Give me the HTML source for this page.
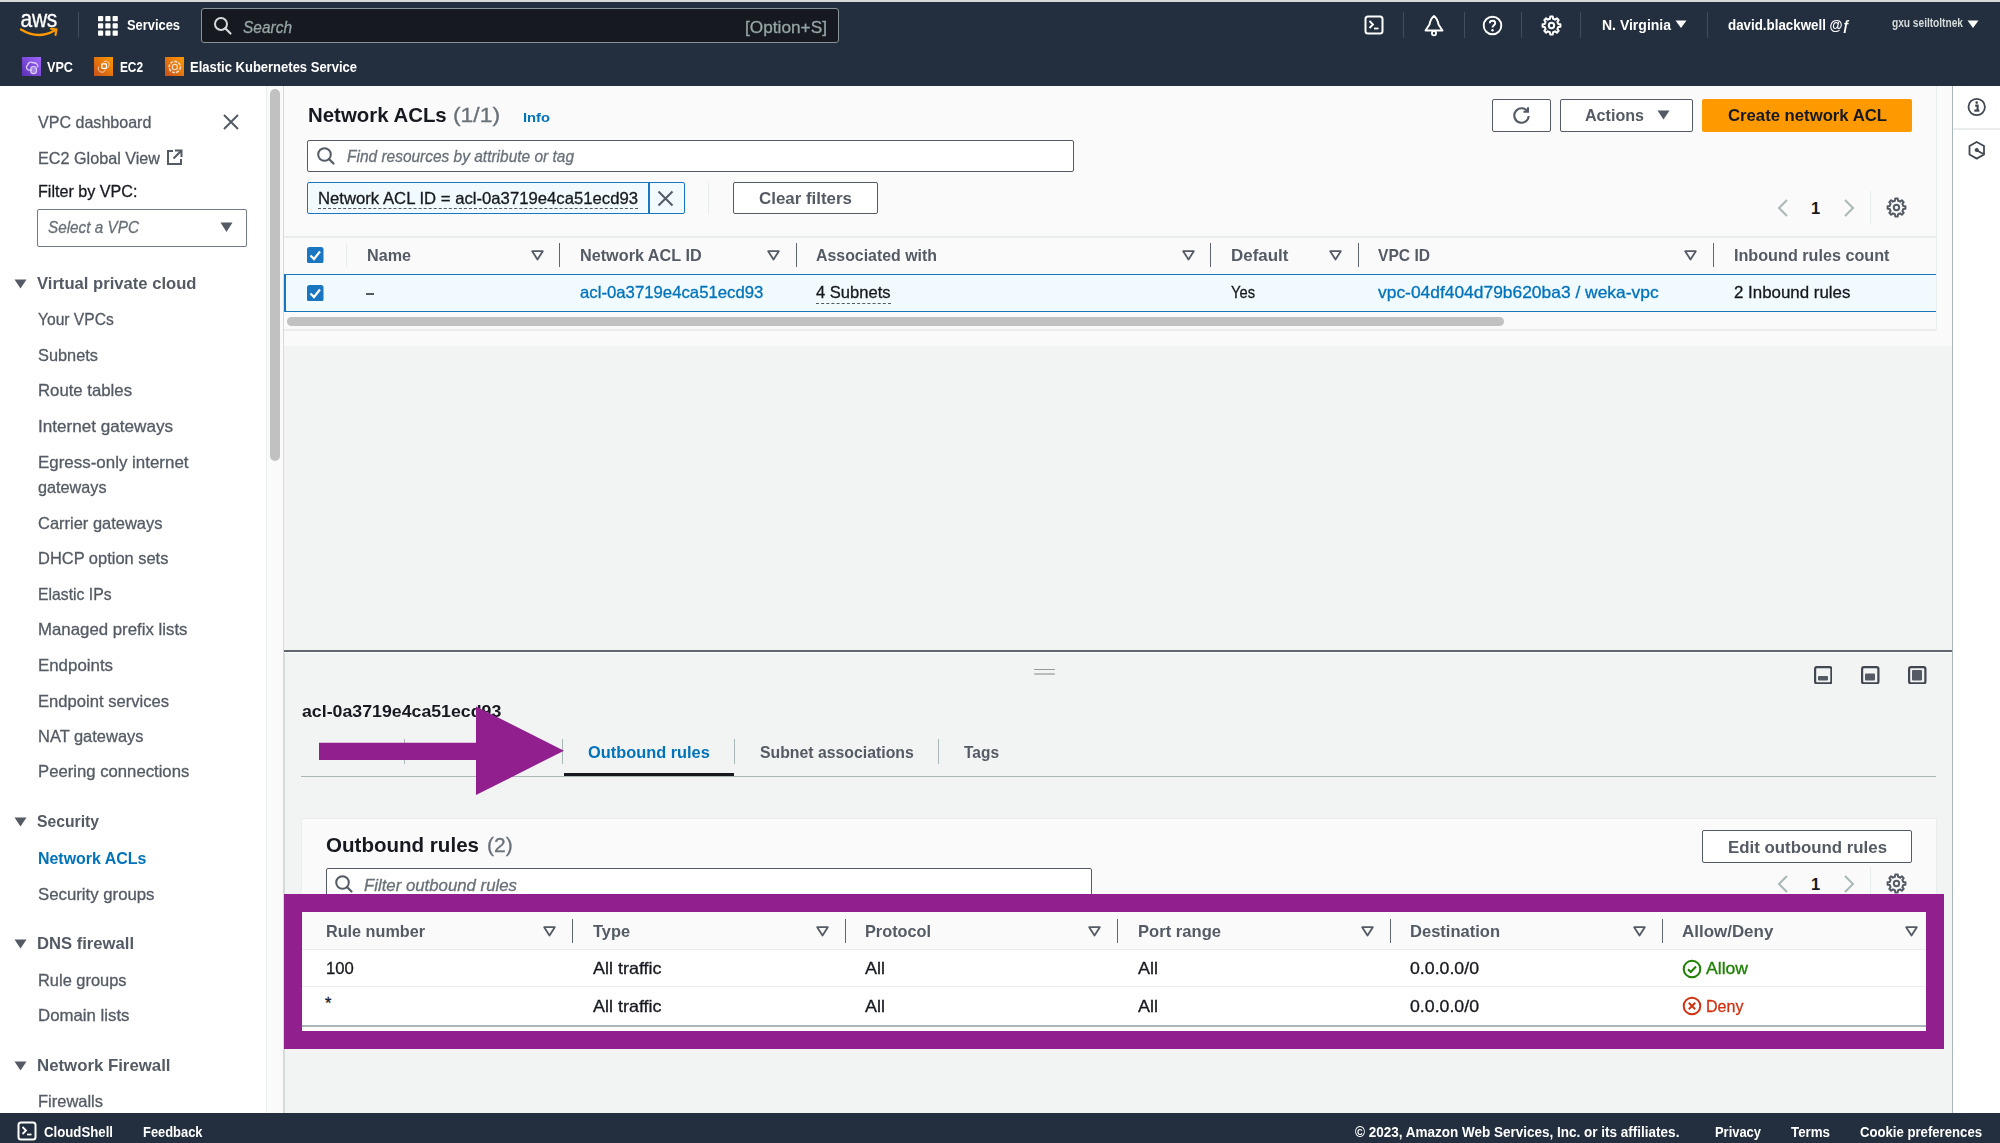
<!DOCTYPE html>
<html><head><meta charset="utf-8"><title>Network ACLs | VPC Console</title>
<style>
html,body{margin:0;padding:0;width:2000px;height:1143px;overflow:hidden;background:#f2f3f3;font-family:"Liberation Sans",sans-serif;}
.t{position:absolute;white-space:nowrap;transform-origin:0 50%;}
.s{-webkit-text-stroke:0.3px currentColor;}
.r{position:absolute;display:block;}
</style></head><body>
<div class="r" style="left:0px;top:0px;width:2000px;height:2px;background:#d9d9d9;"></div>
<div class="r" style="left:0px;top:2px;width:2000px;height:84px;background:#232f3e;"></div>
<div class="t" style="left:20.5px;top:7.75px;font-size:21px;line-height:26px;color:#fff;transform:scale(1.0,1.18);transform-origin:0 100%;letter-spacing:-0.3px;-webkit-text-stroke:0.3px #fff">aws</div>
<svg class="r" style="left:19px;top:27px" width="42" height="12" viewBox="0 0 42 12"><path d="M2 2.5 Q19 13 35.5 3.5" stroke="#ff9900" stroke-width="2.4" fill="none" stroke-linecap="round"/><path d="M32 1.8 L37.5 2.2 L36.5 8" stroke="#ff9900" stroke-width="2.1" fill="none" stroke-linecap="round" stroke-linejoin="round"/></svg>
<div class="r" style="left:77.5px;top:12px;width:1.2px;height:26px;background:#414d5c;"></div>
<svg class="r" style="left:98px;top:16px" width="20" height="20" viewBox="0 0 20 20"><rect x="0.0" y="0.0" width="5.2" height="5.2" rx="0.8" fill="#fff"/><rect x="7.3" y="0.0" width="5.2" height="5.2" rx="0.8" fill="#fff"/><rect x="14.6" y="0.0" width="5.2" height="5.2" rx="0.8" fill="#fff"/><rect x="0.0" y="7.3" width="5.2" height="5.2" rx="0.8" fill="#fff"/><rect x="7.3" y="7.3" width="5.2" height="5.2" rx="0.8" fill="#fff"/><rect x="14.6" y="7.3" width="5.2" height="5.2" rx="0.8" fill="#fff"/><rect x="0.0" y="14.6" width="5.2" height="5.2" rx="0.8" fill="#fff"/><rect x="7.3" y="14.6" width="5.2" height="5.2" rx="0.8" fill="#fff"/><rect x="14.6" y="14.6" width="5.2" height="5.2" rx="0.8" fill="#fff"/></svg>
<div class="t" style="left:127px;top:15.98px;font-size:14.5px;line-height:18px;font-weight:bold;font-style:normal;color:#ffffff;transform:scaleX(0.8883);">Services</div>
<div class="r" style="left:201px;top:8px;width:638px;height:35px;background:#16191f;border:1.3px solid #879596;box-sizing:border-box;border-radius:3px;"></div>
<svg class="r" style="left:213px;top:16px" width="20" height="20" viewBox="0 0 20 20"><circle cx="8" cy="8" r="6" stroke="#d5dbdb" stroke-width="2" fill="none"/><path d="M12.3 12.3 L17.5 17.5" stroke="#d5dbdb" stroke-width="2.2" stroke-linecap="round"/></svg>
<div class="t s" style="left:243px;top:16.61px;font-size:17px;line-height:21px;font-weight:normal;font-style:italic;color:#95a5a6;transform:scaleX(0.9097);">Search</div>
<div class="t s" style="left:745px;top:16.61px;font-size:17px;line-height:21px;font-weight:normal;font-style:normal;color:#95a5a6;transform:scaleX(1.0148);">[Option+S]</div>
<svg class="r" style="left:1364px;top:15px" width="21" height="21" viewBox="0 0 21 21"><rect x="1.5" y="1.5" width="17" height="17" rx="2.5" stroke="#fff" stroke-width="2" fill="none"/><path d="M5.5 6 L9 9.5 L5.5 13" stroke="#fff" stroke-width="1.8" fill="none"/><path d="M10 13.5 H14.5" stroke="#fff" stroke-width="1.8"/></svg>
<div class="r" style="left:1403px;top:12px;width:1.2px;height:26px;background:#414d5c;"></div>
<svg class="r" style="left:1423px;top:14px" width="22" height="23" viewBox="0 0 22 23"><path d="M11 2 C8 4.5 7 7 6.5 10.5 L2.5 16.5 H19.5 L15.5 10.5 C15 7 14 4.5 11 2 Z" stroke="#fff" stroke-width="1.9" fill="none" stroke-linejoin="round"/><circle cx="11" cy="19.2" r="2.1" stroke="#fff" stroke-width="1.8" fill="none"/></svg>
<div class="r" style="left:1463.5px;top:12px;width:1.2px;height:26px;background:#414d5c;"></div>
<svg class="r" style="left:1482px;top:15px" width="21" height="21" viewBox="0 0 21 21"><circle cx="10.5" cy="10.5" r="8.8" stroke="#fff" stroke-width="1.9" fill="none"/><path d="M7.8 8.2 C7.8 5 13.2 5 13.2 8.2 C13.2 10.2 10.5 10.3 10.5 12.6" stroke="#fff" stroke-width="1.9" fill="none"/><circle cx="10.5" cy="15.3" r="1.2" fill="#fff"/></svg>
<div class="r" style="left:1521px;top:12px;width:1.2px;height:26px;background:#414d5c;"></div>
<svg class="r" style="left:1541px;top:15px" width="21" height="21" viewBox="0 0 21 21"><path d="M17.21 8.89 L19.41 9.23 L19.41 11.77 L17.21 12.11 L16.38 14.11 L17.70 15.90 L15.90 17.70 L14.11 16.38 L12.11 17.21 L11.77 19.41 L9.23 19.41 L8.89 17.21 L6.89 16.38 L5.10 17.70 L3.30 15.90 L4.62 14.11 L3.79 12.11 L1.59 11.77 L1.59 9.23 L3.79 8.89 L4.62 6.89 L3.30 5.10 L5.10 3.30 L6.89 4.62 L8.89 3.79 L9.23 1.59 L11.77 1.59 L12.11 3.79 L14.11 4.62 L15.90 3.30 L17.70 5.10 L16.38 6.89 Z" stroke="#fff" stroke-width="2.0" fill="none" stroke-linejoin="round"/><circle cx="10.5" cy="10.5" r="2.7" stroke="#fff" stroke-width="2.0" fill="none"/></svg>
<div class="r" style="left:1580px;top:12px;width:1.2px;height:26px;background:#414d5c;"></div>
<div class="t" style="left:1602px;top:14.80px;font-size:15px;line-height:19px;font-weight:bold;font-style:normal;color:#ffffff;transform:scaleX(0.9336);">N. Virginia</div>
<svg class="r" style="left:1675px;top:20px" width="12" height="9" viewBox="0 0 12 9"><path d="M0.5 0.5 H11.5 L6 8 Z" fill="#fff"/></svg>
<div class="r" style="left:1707px;top:12px;width:1.2px;height:26px;background:#414d5c;"></div>
<div class="t" style="left:1728px;top:14.80px;font-size:15px;line-height:19px;font-weight:bold;font-style:normal;color:#ffffff;transform:scaleX(0.8893);">david.blackwell @ƒ</div>
<div class="t" style="left:1892px;top:16.34px;font-size:12px;line-height:15px;font-weight:bold;font-style:normal;color:#d5dbdb;transform:scaleX(0.8500);letter-spacing:-0.035px;filter:blur(0.6px);">gxu seiltoltnek</div>
<svg class="r" style="left:1967px;top:20px" width="12" height="9" viewBox="0 0 12 9"><path d="M0.5 0.5 H11.5 L6 8 Z" fill="#fff"/></svg>
<svg class="r" style="left:22px;top:57px" width="19" height="19" viewBox="0 0 19 19"><defs><linearGradient id="g22" x1="0" y1="1" x2="1" y2="0"><stop offset="0" stop-color="#5a30b5"/><stop offset="1" stop-color="#a166ff"/></linearGradient></defs><rect width="19" height="19" fill="url(#g22)"/><path d="M9.5 13.2 H7 C4.3 13.2 3.6 9.5 5.6 8.4 C5.8 5.2 9.5 4.2 11.4 6 C13.5 5.2 15.6 6.8 15.8 9.6" stroke="#ddd0f7" stroke-width="1.3" fill="none" stroke-linecap="round"/><rect x="8.8" y="9.5" width="5.6" height="7.2" rx="2.6" stroke="#ddd0f7" stroke-width="1.2" fill="rgba(255,255,255,0.3)"/></svg>
<div class="t" style="left:46.6px;top:57.65px;font-size:14px;line-height:18px;font-weight:bold;font-style:normal;color:#ffffff;transform:scaleX(0.9032);">VPC</div>
<svg class="r" style="left:94px;top:57px" width="19" height="19" viewBox="0 0 19 19"><defs><linearGradient id="g94" x1="0" y1="1" x2="1" y2="0"><stop offset="0" stop-color="#c8511b"/><stop offset="1" stop-color="#ff9900"/></linearGradient></defs><rect width="19" height="19" fill="url(#g94)"/><rect x="7.8" y="6.8" width="4.6" height="4.6" rx="0.6" stroke="#fff" stroke-width="1.3" fill="none"/><path d="M4.8 9.5 C3.6 11 4 15 8 15.2 C10 15.3 11 14 11.2 12.5 M9.5 5.2 C10.5 3.6 15 3.5 15.2 7.5 C15.3 9.5 14 10.6 12.6 10.8" stroke="#f6dcc4" stroke-width="1" fill="none" opacity="0.9"/></svg>
<div class="t" style="left:120px;top:57.65px;font-size:14px;line-height:18px;font-weight:bold;font-style:normal;color:#ffffff;transform:scaleX(0.8500);letter-spacing:-0.088px;">EC2</div>
<svg class="r" style="left:165px;top:57px" width="19" height="19" viewBox="0 0 19 19"><defs><linearGradient id="g165" x1="0" y1="1" x2="1" y2="0"><stop offset="0" stop-color="#c8511b"/><stop offset="1" stop-color="#ff9900"/></linearGradient></defs><rect width="19" height="19" fill="url(#g165)"/><circle cx="9.8" cy="10" r="5.6" stroke="#f6dcc4" stroke-width="1.6" fill="none" stroke-dasharray="3 1.2"/><circle cx="9.8" cy="10" r="2.6" stroke="#f6dcc4" stroke-width="1.2" fill="none"/></svg>
<div class="t" style="left:190px;top:57.65px;font-size:14px;line-height:18px;font-weight:bold;font-style:normal;color:#ffffff;transform:scaleX(0.9290);">Elastic Kubernetes Service</div>
<div class="r" style="left:0px;top:86px;width:266px;height:1027px;background:#ffffff;"></div>
<div class="r" style="left:266px;top:86px;width:1px;height:1027px;background:#eaeded;"></div>
<div class="r" style="left:267px;top:86px;width:17px;height:1027px;background:#fafafa;"></div>
<div class="r" style="left:270px;top:89px;width:10px;height:371.6px;background:#c1c1c1;border-radius:5px;"></div>
<div class="r" style="left:283px;top:86px;width:1.8px;height:1027px;background:#d5dbdb;"></div>
<div class="t s" style="left:37.5px;top:111.98px;font-size:16.5px;line-height:21px;font-weight:normal;font-style:normal;color:#545b64;transform:scaleX(0.9734);">VPC dashboard</div>
<svg class="r" style="left:222px;top:113px" width="18" height="18" viewBox="0 0 18 18"><path d="M2 2 L16 16 M16 2 L2 16" stroke="#545b64" stroke-width="2" /></svg>
<div class="t s" style="left:37.5px;top:147.78px;font-size:16.5px;line-height:21px;font-weight:normal;font-style:normal;color:#545b64;transform:scaleX(0.9805);">EC2 Global View</div>
<svg class="r" style="left:165px;top:148px" width="19" height="19" viewBox="0 0 19 19"><path d="M8 3 H3 V16 H16 V11" stroke="#545b64" stroke-width="2" fill="none"/><path d="M10 2.5 H16.5 V9 M16.5 2.5 L8.5 10.5" stroke="#545b64" stroke-width="2" fill="none"/></svg>
<div class="t s" style="left:37.5px;top:180.88px;font-size:16.5px;line-height:21px;font-weight:normal;font-style:normal;color:#16191f;transform:scaleX(0.9777);">Filter by VPC:</div>
<div class="r" style="left:37px;top:209px;width:210px;height:37.5px;background:#fff;border:1.5px solid #6f7a86;box-sizing:border-box;border-radius:2px;"></div>
<div class="t s" style="left:47.5px;top:217.28px;font-size:16.5px;line-height:21px;font-weight:normal;font-style:italic;color:#687078;transform:scaleX(0.9273);">Select a VPC</div>
<svg class="r" style="left:220px;top:222px" width="13" height="11" viewBox="0 0 13 11"><path d="M0.5 0.5 H12.5 L6.5 10 Z" fill="#545b64"/></svg>
<svg class="r" style="left:14px;top:278.9px" width="13" height="10" viewBox="0 0 13 10"><path d="M0.5 0.5 H12.5 L6.5 9.5 Z" fill="#545b64"/></svg>
<div class="t" style="left:36.5px;top:273.18px;font-size:16.5px;line-height:21px;font-weight:bold;font-style:normal;color:#545b64;transform:scaleX(1.0074);">Virtual private cloud</div>
<div class="t s" style="left:37.5px;top:309.48px;font-size:16.5px;line-height:21px;font-weight:normal;font-style:normal;color:#545b64;transform:scaleX(0.9450);">Your VPCs</div>
<div class="t s" style="left:37.5px;top:344.98px;font-size:16.5px;line-height:21px;font-weight:normal;font-style:normal;color:#545b64;transform:scaleX(0.9910);">Subnets</div>
<div class="t s" style="left:37.5px;top:380.28px;font-size:16.5px;line-height:21px;font-weight:normal;font-style:normal;color:#545b64;transform:scaleX(1.0146);">Route tables</div>
<div class="t s" style="left:37.5px;top:415.78px;font-size:16.5px;line-height:21px;font-weight:normal;font-style:normal;color:#545b64;transform:scaleX(1.0365);">Internet gateways</div>
<div class="t s" style="left:37.5px;top:451.58px;font-size:16.5px;line-height:21px;font-weight:normal;font-style:normal;color:#545b64;transform:scaleX(1.0256);">Egress-only internet</div>
<div class="t s" style="left:37.5px;top:477.28px;font-size:16.5px;line-height:21px;font-weight:normal;font-style:normal;color:#545b64;transform:scaleX(0.9827);">gateways</div>
<div class="t s" style="left:37.5px;top:512.78px;font-size:16.5px;line-height:21px;font-weight:normal;font-style:normal;color:#545b64;transform:scaleX(0.9983);">Carrier gateways</div>
<div class="t s" style="left:37.5px;top:548.38px;font-size:16.5px;line-height:21px;font-weight:normal;font-style:normal;color:#545b64;transform:scaleX(0.9966);">DHCP option sets</div>
<div class="t s" style="left:37.5px;top:584.08px;font-size:16.5px;line-height:21px;font-weight:normal;font-style:normal;color:#545b64;transform:scaleX(0.9543);">Elastic IPs</div>
<div class="t s" style="left:37.5px;top:619.28px;font-size:16.5px;line-height:21px;font-weight:normal;font-style:normal;color:#545b64;transform:scaleX(1.0188);">Managed prefix lists</div>
<div class="t s" style="left:37.5px;top:655.28px;font-size:16.5px;line-height:21px;font-weight:normal;font-style:normal;color:#545b64;transform:scaleX(1.0219);">Endpoints</div>
<div class="t s" style="left:37.5px;top:690.98px;font-size:16.5px;line-height:21px;font-weight:normal;font-style:normal;color:#545b64;transform:scaleX(1.0058);">Endpoint services</div>
<div class="t s" style="left:37.5px;top:726.28px;font-size:16.5px;line-height:21px;font-weight:normal;font-style:normal;color:#545b64;transform:scaleX(0.9974);">NAT gateways</div>
<div class="t s" style="left:37.5px;top:761.48px;font-size:16.5px;line-height:21px;font-weight:normal;font-style:normal;color:#545b64;transform:scaleX(1.0119);">Peering connections</div>
<svg class="r" style="left:14px;top:816.9px" width="13" height="10" viewBox="0 0 13 10"><path d="M0.5 0.5 H12.5 L6.5 9.5 Z" fill="#545b64"/></svg>
<div class="t" style="left:36.5px;top:811.18px;font-size:16.5px;line-height:21px;font-weight:bold;font-style:normal;color:#545b64;transform:scaleX(0.9522);">Security</div>
<div class="t" style="left:37.5px;top:848.18px;font-size:16.5px;line-height:21px;font-weight:bold;font-style:normal;color:#0073bb;transform:scaleX(0.9656);">Network ACLs</div>
<div class="t s" style="left:37.5px;top:883.78px;font-size:16.5px;line-height:21px;font-weight:normal;font-style:normal;color:#545b64;transform:scaleX(1.0162);">Security groups</div>
<svg class="r" style="left:14px;top:938.8px" width="13" height="10" viewBox="0 0 13 10"><path d="M0.5 0.5 H12.5 L6.5 9.5 Z" fill="#545b64"/></svg>
<div class="t" style="left:36.5px;top:933.08px;font-size:16.5px;line-height:21px;font-weight:bold;font-style:normal;color:#545b64;transform:scaleX(1.0075);">DNS firewall</div>
<div class="t s" style="left:37.5px;top:970.08px;font-size:16.5px;line-height:21px;font-weight:normal;font-style:normal;color:#545b64;transform:scaleX(0.9947);">Rule groups</div>
<div class="t s" style="left:37.5px;top:1005.18px;font-size:16.5px;line-height:21px;font-weight:normal;font-style:normal;color:#545b64;transform:scaleX(1.0183);">Domain lists</div>
<svg class="r" style="left:14px;top:1060.7px" width="13" height="10" viewBox="0 0 13 10"><path d="M0.5 0.5 H12.5 L6.5 9.5 Z" fill="#545b64"/></svg>
<div class="t" style="left:36.5px;top:1054.98px;font-size:16.5px;line-height:21px;font-weight:bold;font-style:normal;color:#545b64;transform:scaleX(1.0181);">Network Firewall</div>
<div class="t s" style="left:37.5px;top:1091.18px;font-size:16.5px;line-height:21px;font-weight:normal;font-style:normal;color:#545b64;transform:scaleX(0.9986);">Firewalls</div>
<div class="r" style="left:284.3px;top:86px;width:1668px;height:564.5px;background:#f2f3f3;"></div>
<div class="r" style="left:284.3px;top:86px;width:1668px;height:260px;background:#fafafa;"></div>
<div class="r" style="left:1935.5px;top:86px;width:1.5px;height:244px;background:#eaeded;"></div>
<div class="r" style="left:284.3px;top:329px;width:1652px;height:2px;background:#eaeded;"></div>
<div class="t" style="left:307.7px;top:101.92px;font-size:21px;line-height:26px;font-weight:bold;font-style:normal;color:#16191f;transform:scaleX(0.9716);">Network ACLs</div>
<div class="t s" style="left:453px;top:101.92px;font-size:21px;line-height:26px;font-weight:normal;font-style:normal;color:#687078;transform:scaleX(1.0884);">(1/1)</div>
<div class="t" style="left:522.7px;top:109.22px;font-size:13.5px;line-height:17px;font-weight:bold;font-style:normal;color:#0073bb;transform:scaleX(1.0914);">Info</div>
<div class="r" style="left:1491.8px;top:99px;width:59px;height:32.7px;background:#fff;border:1.5px solid #545b64;box-sizing:border-box;border-radius:2px;"></div>
<svg class="r" style="left:1511px;top:105px" width="21" height="21" viewBox="0 0 21 21"><path d="M16.5 6.5 A7.2 7.2 0 1 0 17.7 11" stroke="#545b64" stroke-width="2.1" fill="none"/><path d="M12.5 6.8 H17 V2.3" stroke="#545b64" stroke-width="2.1" fill="none"/></svg>
<div class="r" style="left:1560.4px;top:99px;width:132.5px;height:32.7px;background:#fff;border:1.5px solid #545b64;box-sizing:border-box;border-radius:2px;"></div>
<div class="t" style="left:1585px;top:105.38px;font-size:16.5px;line-height:21px;font-weight:bold;font-style:normal;color:#545b64;transform:scaleX(0.9751);">Actions</div>
<svg class="r" style="left:1657px;top:110px" width="13" height="10" viewBox="0 0 13 10"><path d="M0.5 0.5 H12.5 L6.5 9.5 Z" fill="#545b64"/></svg>
<div class="r" style="left:1702.3px;top:98.6px;width:209.5px;height:33.2px;background:#ff9900;border-radius:2px;"></div>
<div class="t" style="left:1727.5px;top:105.38px;font-size:16.5px;line-height:21px;font-weight:bold;font-style:normal;color:#16191f;transform:scaleX(1.0121);">Create network ACL</div>
<div class="r" style="left:307px;top:139.5px;width:766.5px;height:32px;background:#fff;border:1.3px solid #545b64;box-sizing:border-box;border-radius:2px;"></div>
<svg class="r" style="left:316px;top:146px" width="20" height="20" viewBox="0 0 20 20"><circle cx="8.5" cy="8.5" r="6.3" stroke="#545b64" stroke-width="2" fill="none"/><path d="M13 13 L17.5 17.5" stroke="#545b64" stroke-width="2.2" stroke-linecap="round"/></svg>
<div class="t s" style="left:347px;top:146.48px;font-size:16.5px;line-height:21px;font-weight:normal;font-style:italic;color:#687078;transform:scaleX(0.9375);">Find resources by attribute or tag</div>
<div class="r" style="left:307px;top:181.8px;width:377.5px;height:32.5px;background:#f1faff;border:1.6px solid #1a76c0;box-sizing:border-box;border-radius:2px;"></div>
<div class="r" style="left:648px;top:182px;width:1.5px;height:32px;background:#1a76c0;"></div>
<div class="t s" style="left:318px;top:187.78px;font-size:16.5px;line-height:21px;font-weight:normal;font-style:normal;color:#16191f;transform:scaleX(1.0117);">Network ACL ID = acl-0a3719e4ca51ecd93</div>
<div class="r" style="left:318px;top:207.5px;width:320px;height:0;border-top:1.3px dashed #545b64"></div>
<svg class="r" style="left:657px;top:190px" width="17" height="17" viewBox="0 0 17 17"><path d="M1.5 1.5 L15.5 15.5 M15.5 1.5 L1.5 15.5" stroke="#545b64" stroke-width="2"/></svg>
<div class="r" style="left:708px;top:182px;width:1.2px;height:32px;background:#eaeded;"></div>
<div class="r" style="left:733px;top:182px;width:144.5px;height:32.3px;background:#fff;border:1.5px solid #545b64;box-sizing:border-box;border-radius:2px;"></div>
<div class="t" style="left:759px;top:188.08px;font-size:16.5px;line-height:21px;font-weight:bold;font-style:normal;color:#545b64;transform:scaleX(1.0243);">Clear filters</div>
<svg class="r" style="left:1776px;top:198.5px" width="14" height="18" viewBox="0 0 14 18"><path d="M11 1 L3 9 L11 17" stroke="#aab7b8" stroke-width="2" fill="none"/></svg>
<div class="t" style="left:1811px;top:197.58px;font-size:16.5px;line-height:21px;font-weight:bold;font-style:normal;color:#16191f;">1</div>
<svg class="r" style="left:1842px;top:198.5px" width="14" height="18" viewBox="0 0 14 18"><path d="M3 1 L11 9 L3 17" stroke="#aab7b8" stroke-width="2" fill="none"/></svg>
<div class="r" style="left:1870.3px;top:191.0px;width:1.2px;height:33px;background:#eaeded;"></div>
<svg class="r" style="left:1886px;top:197.0px" width="21" height="21" viewBox="0 0 21 21"><path d="M17.21 8.89 L19.41 9.23 L19.41 11.77 L17.21 12.11 L16.38 14.11 L17.70 15.90 L15.90 17.70 L14.11 16.38 L12.11 17.21 L11.77 19.41 L9.23 19.41 L8.89 17.21 L6.89 16.38 L5.10 17.70 L3.30 15.90 L4.62 14.11 L3.79 12.11 L1.59 11.77 L1.59 9.23 L3.79 8.89 L4.62 6.89 L3.30 5.10 L5.10 3.30 L6.89 4.62 L8.89 3.79 L9.23 1.59 L11.77 1.59 L12.11 3.79 L14.11 4.62 L15.90 3.30 L17.70 5.10 L16.38 6.89 Z" stroke="#545b64" stroke-width="2.0" fill="none" stroke-linejoin="round"/><circle cx="10.5" cy="10.5" r="2.7" stroke="#545b64" stroke-width="2.0" fill="none"/></svg>
<div class="r" style="left:284.3px;top:236px;width:1652px;height:1.5px;background:#eaeded;"></div>
<svg class="r" style="left:307px;top:246.5px" width="16.5" height="16.5" viewBox="0 0 16.5 16.5"><rect x="0" y="0" width="16.5" height="16.5" rx="2.5" fill="#1a76c0"/><path d="M3.5 8.5 L7 12 L13 4.5" stroke="#fff" stroke-width="2.2" fill="none"/></svg>
<div class="r" style="left:346.3px;top:243px;width:1.2px;height:23.5px;background:#eaeded;"></div>
<div class="t" style="left:366.7px;top:244.98px;font-size:16.5px;line-height:21px;font-weight:bold;font-style:normal;color:#545b64;transform:scaleX(0.9791);">Name</div>
<svg class="r" style="left:530.5px;top:250px" width="13" height="11" viewBox="0 0 13 11"><path d="M1.2 1.2 H11.8 L6.5 9.5 Z" stroke="#545b64" stroke-width="1.8" fill="none" stroke-linejoin="round"/></svg>
<div class="r" style="left:558.7px;top:243px;width:1.3px;height:23.5px;background:#5f6670;"></div>
<div class="t" style="left:579.6px;top:244.98px;font-size:16.5px;line-height:21px;font-weight:bold;font-style:normal;color:#545b64;transform:scaleX(0.9825);">Network ACL ID</div>
<svg class="r" style="left:767.3px;top:250px" width="13" height="11" viewBox="0 0 13 11"><path d="M1.2 1.2 H11.8 L6.5 9.5 Z" stroke="#545b64" stroke-width="1.8" fill="none" stroke-linejoin="round"/></svg>
<div class="r" style="left:795.8px;top:243px;width:1.3px;height:23.5px;background:#5f6670;"></div>
<div class="t" style="left:816px;top:244.98px;font-size:16.5px;line-height:21px;font-weight:bold;font-style:normal;color:#545b64;transform:scaleX(0.9633);">Associated with</div>
<svg class="r" style="left:1181.5px;top:250px" width="13" height="11" viewBox="0 0 13 11"><path d="M1.2 1.2 H11.8 L6.5 9.5 Z" stroke="#545b64" stroke-width="1.8" fill="none" stroke-linejoin="round"/></svg>
<div class="r" style="left:1210px;top:243px;width:1.3px;height:23.5px;background:#5f6670;"></div>
<div class="t" style="left:1230.6px;top:244.98px;font-size:16.5px;line-height:21px;font-weight:bold;font-style:normal;color:#545b64;transform:scaleX(1.0264);">Default</div>
<svg class="r" style="left:1329px;top:250px" width="13" height="11" viewBox="0 0 13 11"><path d="M1.2 1.2 H11.8 L6.5 9.5 Z" stroke="#545b64" stroke-width="1.8" fill="none" stroke-linejoin="round"/></svg>
<div class="r" style="left:1358px;top:243px;width:1.3px;height:23.5px;background:#5f6670;"></div>
<div class="t" style="left:1378px;top:244.98px;font-size:16.5px;line-height:21px;font-weight:bold;font-style:normal;color:#545b64;transform:scaleX(0.9452);">VPC ID</div>
<svg class="r" style="left:1683.5px;top:250px" width="13" height="11" viewBox="0 0 13 11"><path d="M1.2 1.2 H11.8 L6.5 9.5 Z" stroke="#545b64" stroke-width="1.8" fill="none" stroke-linejoin="round"/></svg>
<div class="r" style="left:1713px;top:243px;width:1.3px;height:23.5px;background:#5f6670;"></div>
<div class="t" style="left:1733.6px;top:244.98px;font-size:16.5px;line-height:21px;font-weight:bold;font-style:normal;color:#545b64;transform:scaleX(0.9800);">Inbound rules count</div>
<div class="r" style="left:284.3px;top:273.5px;width:1651.5px;height:38.5px;background:#f1faff;border:1.6px solid #1a76c0;box-sizing:border-box;border-right:none;"></div>
<div class="r" style="left:284.3px;top:273.5px;width:1.6px;height:38.5px;background:#1a76c0;"></div>
<svg class="r" style="left:307px;top:284.5px" width="16.5" height="16.5" viewBox="0 0 16.5 16.5"><rect x="0" y="0" width="16.5" height="16.5" rx="2.5" fill="#1a76c0"/><path d="M3.5 8.5 L7 12 L13 4.5" stroke="#fff" stroke-width="2.2" fill="none"/></svg>
<div class="r" style="left:365.8px;top:293.3px;width:8.5px;height:2.1px;background:#545b64;"></div>
<div class="t s" style="left:579.6px;top:282.18px;font-size:16.5px;line-height:21px;font-weight:normal;font-style:normal;color:#0073bb;transform:scaleX(1.0147);">acl-0a3719e4ca51ecd93</div>
<div class="t s" style="left:816px;top:282.18px;font-size:16.5px;line-height:21px;font-weight:normal;font-style:normal;color:#16191f;transform:scaleX(1.0026);">4 Subnets</div>
<div class="r" style="left:816px;top:302.5px;width:74.5px;height:0;border-top:1.3px dashed #545b64"></div>
<div class="t s" style="left:1230.6px;top:282.18px;font-size:16.5px;line-height:21px;font-weight:normal;font-style:normal;color:#16191f;transform:scaleX(0.8916);">Yes</div>
<div class="t s" style="left:1378px;top:282.18px;font-size:16.5px;line-height:21px;font-weight:normal;font-style:normal;color:#0073bb;transform:scaleX(1.0548);">vpc-04df404d79b620ba3 / weka-vpc</div>
<div class="t s" style="left:1733.6px;top:282.18px;font-size:16.5px;line-height:21px;font-weight:normal;font-style:normal;color:#16191f;transform:scaleX(1.0233);">2 Inbound rules</div>
<div class="r" style="left:287px;top:316.7px;width:1216.5px;height:9px;background:#c1c1c1;border-radius:4.5px;"></div>
<div class="r" style="left:1952px;top:86px;width:48px;height:1027px;background:#ffffff;"></div>
<div class="r" style="left:1952px;top:86px;width:1.3px;height:1027px;background:#aab7b8;"></div>
<div class="r" style="left:1953px;top:128.3px;width:47px;height:1.3px;background:#eaeded;"></div>
<svg class="r" style="left:1967px;top:97px" width="20" height="20" viewBox="0 0 20 20"><circle cx="9.7" cy="10" r="8.2" stroke="#414750" stroke-width="1.8" fill="none"/><circle cx="9.7" cy="5.6" r="1.3" fill="#414750"/><path d="M8.2 8.6 H10.6 V13.2" stroke="#414750" stroke-width="2.1" fill="none"/><path d="M7.3 13.6 H12.3" stroke="#414750" stroke-width="2.2" fill="none"/></svg>
<svg class="r" style="left:1967px;top:140px" width="20" height="21" viewBox="0 0 20 21"><path d="M9.7 2 L17 6 V14.5 L9.7 18.6 L2.5 14.5 V6 Z" stroke="#414750" stroke-width="1.8" fill="none" stroke-linejoin="round"/><circle cx="9.7" cy="10" r="1.6" fill="#414750" stroke="#414750"/><path d="M10 10.5 L16.5 14" stroke="#414750" stroke-width="1.6"/></svg>
<div class="r" style="left:284.3px;top:649.9px;width:1668px;height:1.9px;background:#5f6670;"></div>
<div class="r" style="left:284.3px;top:651.8px;width:1668px;height:1.2px;background:#ffffff;"></div>
<div class="r" style="left:1034px;top:668.8px;width:21px;height:1.6px;background:#999999;border-radius:1px;"></div>
<div class="r" style="left:1034px;top:673px;width:21px;height:1.8px;background:#bbbbbb;border-radius:1px;"></div>
<svg class="r" style="left:1813.8px;top:665.5px" width="18.5" height="18.5" viewBox="0 0 18.5 18.5"><rect x="1.1" y="1.1" width="16.3" height="16.3" rx="1.8" stroke="#414750" stroke-width="2.2" fill="none"/><rect x="4" y="10" width="10" height="4.5" rx="1" fill="#545b64"/></svg>
<svg class="r" style="left:1861px;top:665.5px" width="18.5" height="18.5" viewBox="0 0 18.5 18.5"><rect x="1.1" y="1.1" width="16.3" height="16.3" rx="1.8" stroke="#414750" stroke-width="2.2" fill="none"/><rect x="4" y="7.5" width="10" height="7" rx="1" fill="#545b64"/></svg>
<svg class="r" style="left:1908.3px;top:665.5px" width="18.5" height="18.5" viewBox="0 0 18.5 18.5"><rect x="1.1" y="1.1" width="16.3" height="16.3" rx="1.8" stroke="#414750" stroke-width="2.2" fill="none"/><rect x="4" y="4" width="10" height="10.5" rx="1" fill="#545b64"/></svg>
<div class="t" style="left:301.7px;top:701.18px;font-size:16.5px;line-height:21px;font-weight:bold;font-style:normal;color:#16191f;transform:scaleX(1.0753);">acl-0a3719e4ca51ecd93</div>
<div class="r" style="left:301px;top:775.8px;width:1635px;height:1.3px;background:#aab7b8;"></div>
<div class="r" style="left:404px;top:739px;width:1.2px;height:25px;background:#aab7b8;"></div>
<div class="r" style="left:561.6px;top:739px;width:1.2px;height:25px;background:#aab7b8;"></div>
<div class="r" style="left:734.2px;top:739px;width:1.2px;height:25px;background:#aab7b8;"></div>
<div class="r" style="left:938.2px;top:739px;width:1.2px;height:25px;background:#aab7b8;"></div>
<div class="r" style="left:563.8px;top:773px;width:170.2px;height:3px;background:#16191f;"></div>
<div class="t" style="left:588.2px;top:741.78px;font-size:16.5px;line-height:21px;font-weight:bold;font-style:normal;color:#0073bb;transform:scaleX(0.9916);">Outbound rules</div>
<div class="t" style="left:759.8px;top:741.78px;font-size:16.5px;line-height:21px;font-weight:bold;font-style:normal;color:#545b64;transform:scaleX(0.9585);">Subnet associations</div>
<div class="t" style="left:963.6px;top:741.78px;font-size:16.5px;line-height:21px;font-weight:bold;font-style:normal;color:#545b64;transform:scaleX(0.9387);">Tags</div>
<div class="r" style="left:300.5px;top:818px;width:1636px;height:212px;background:#fafafa;border:1px solid #eaeded;box-sizing:border-box;border-bottom:none;"></div>
<div class="t" style="left:325.7px;top:832.22px;font-size:21px;line-height:26px;font-weight:bold;font-style:normal;color:#16191f;transform:scaleX(0.9787);">Outbound rules</div>
<div class="t s" style="left:487px;top:832.22px;font-size:21px;line-height:26px;font-weight:normal;font-style:normal;color:#687078;transform:scaleX(1.0013);">(2)</div>
<div class="r" style="left:1702.4px;top:830.4px;width:209.3px;height:32.4px;background:#fff;border:1.5px solid #545b64;box-sizing:border-box;border-radius:2px;"></div>
<div class="t" style="left:1727.5px;top:837.28px;font-size:16.5px;line-height:21px;font-weight:bold;font-style:normal;color:#545b64;transform:scaleX(1.0204);">Edit outbound rules</div>
<div class="r" style="left:325.5px;top:867.8px;width:766px;height:40px;background:#fff;border:1.3px solid #545b64;box-sizing:border-box;border-radius:2px;"></div>
<svg class="r" style="left:334px;top:874px" width="20" height="20" viewBox="0 0 20 20"><circle cx="8.5" cy="8.5" r="6.3" stroke="#545b64" stroke-width="2" fill="none"/><path d="M13 13 L17.5 17.5" stroke="#545b64" stroke-width="2.2" stroke-linecap="round"/></svg>
<div class="t s" style="left:364px;top:874.78px;font-size:16.5px;line-height:21px;font-weight:normal;font-style:italic;color:#687078;transform:scaleX(1.0171);">Filter outbound rules</div>
<svg class="r" style="left:1776px;top:874.5px" width="14" height="18" viewBox="0 0 14 18"><path d="M11 1 L3 9 L11 17" stroke="#aab7b8" stroke-width="2" fill="none"/></svg>
<div class="t" style="left:1811px;top:873.58px;font-size:16.5px;line-height:21px;font-weight:bold;font-style:normal;color:#16191f;">1</div>
<svg class="r" style="left:1842px;top:874.5px" width="14" height="18" viewBox="0 0 14 18"><path d="M3 1 L11 9 L3 17" stroke="#aab7b8" stroke-width="2" fill="none"/></svg>
<div class="r" style="left:1870.3px;top:867.0px;width:1.2px;height:33px;background:#eaeded;"></div>
<svg class="r" style="left:1886px;top:873.0px" width="21" height="21" viewBox="0 0 21 21"><path d="M17.21 8.89 L19.41 9.23 L19.41 11.77 L17.21 12.11 L16.38 14.11 L17.70 15.90 L15.90 17.70 L14.11 16.38 L12.11 17.21 L11.77 19.41 L9.23 19.41 L8.89 17.21 L6.89 16.38 L5.10 17.70 L3.30 15.90 L4.62 14.11 L3.79 12.11 L1.59 11.77 L1.59 9.23 L3.79 8.89 L4.62 6.89 L3.30 5.10 L5.10 3.30 L6.89 4.62 L8.89 3.79 L9.23 1.59 L11.77 1.59 L12.11 3.79 L14.11 4.62 L15.90 3.30 L17.70 5.10 L16.38 6.89 Z" stroke="#545b64" stroke-width="2.0" fill="none" stroke-linejoin="round"/><circle cx="10.5" cy="10.5" r="2.7" stroke="#545b64" stroke-width="2.0" fill="none"/></svg>
<div class="r" style="left:302px;top:911.6px;width:1624px;height:37.5px;background:#fafafa;"></div>
<div class="r" style="left:302px;top:948.5px;width:1624px;height:1.3px;background:#eaeded;"></div>
<div class="r" style="left:302px;top:949.8px;width:1624px;height:76px;background:#ffffff;"></div>
<div class="r" style="left:302px;top:986px;width:1624px;height:1.3px;background:#eaeded;"></div>
<div class="r" style="left:302px;top:1025px;width:1624px;height:2px;background:#aab7b8;"></div>
<div class="r" style="left:302px;top:1027px;width:1624px;height:4px;background:#ffffff;"></div>
<div class="t" style="left:325.7px;top:920.58px;font-size:16.5px;line-height:21px;font-weight:bold;font-style:normal;color:#545b64;transform:scaleX(0.9817);">Rule number</div>
<svg class="r" style="left:543.3px;top:925.6px" width="13" height="11" viewBox="0 0 13 11"><path d="M1.2 1.2 H11.8 L6.5 9.5 Z" stroke="#545b64" stroke-width="1.8" fill="none" stroke-linejoin="round"/></svg>
<div class="r" style="left:571.8px;top:919px;width:1.3px;height:23.5px;background:#5f6670;"></div>
<div class="t" style="left:592.5px;top:920.58px;font-size:16.5px;line-height:21px;font-weight:bold;font-style:normal;color:#545b64;transform:scaleX(0.9923);">Type</div>
<svg class="r" style="left:815.5px;top:925.6px" width="13" height="11" viewBox="0 0 13 11"><path d="M1.2 1.2 H11.8 L6.5 9.5 Z" stroke="#545b64" stroke-width="1.8" fill="none" stroke-linejoin="round"/></svg>
<div class="r" style="left:844.5px;top:919px;width:1.3px;height:23.5px;background:#5f6670;"></div>
<div class="t" style="left:865px;top:920.58px;font-size:16.5px;line-height:21px;font-weight:bold;font-style:normal;color:#545b64;transform:scaleX(0.9862);">Protocol</div>
<svg class="r" style="left:1088px;top:925.6px" width="13" height="11" viewBox="0 0 13 11"><path d="M1.2 1.2 H11.8 L6.5 9.5 Z" stroke="#545b64" stroke-width="1.8" fill="none" stroke-linejoin="round"/></svg>
<div class="r" style="left:1116.5px;top:919px;width:1.3px;height:23.5px;background:#5f6670;"></div>
<div class="t" style="left:1137.5px;top:920.58px;font-size:16.5px;line-height:21px;font-weight:bold;font-style:normal;color:#545b64;transform:scaleX(1.0058);">Port range</div>
<svg class="r" style="left:1360.5px;top:925.6px" width="13" height="11" viewBox="0 0 13 11"><path d="M1.2 1.2 H11.8 L6.5 9.5 Z" stroke="#545b64" stroke-width="1.8" fill="none" stroke-linejoin="round"/></svg>
<div class="r" style="left:1389.5px;top:919px;width:1.3px;height:23.5px;background:#5f6670;"></div>
<div class="t" style="left:1409.8px;top:920.58px;font-size:16.5px;line-height:21px;font-weight:bold;font-style:normal;color:#545b64;transform:scaleX(1.0018);">Destination</div>
<svg class="r" style="left:1633px;top:925.6px" width="13" height="11" viewBox="0 0 13 11"><path d="M1.2 1.2 H11.8 L6.5 9.5 Z" stroke="#545b64" stroke-width="1.8" fill="none" stroke-linejoin="round"/></svg>
<div class="r" style="left:1662.1px;top:919px;width:1.3px;height:23.5px;background:#5f6670;"></div>
<div class="t" style="left:1682.2px;top:920.58px;font-size:16.5px;line-height:21px;font-weight:bold;font-style:normal;color:#545b64;transform:scaleX(1.0267);">Allow/Deny</div>
<svg class="r" style="left:1905.3px;top:925.6px" width="13" height="11" viewBox="0 0 13 11"><path d="M1.2 1.2 H11.8 L6.5 9.5 Z" stroke="#545b64" stroke-width="1.8" fill="none" stroke-linejoin="round"/></svg>
<div class="t s" style="left:325.7px;top:958.18px;font-size:16.5px;line-height:21px;font-weight:normal;font-style:normal;color:#16191f;transform:scaleX(1.0098);">100</div>
<div class="t s" style="left:592.5px;top:958.18px;font-size:16.5px;line-height:21px;font-weight:normal;font-style:normal;color:#16191f;transform:scaleX(1.0879);">All traffic</div>
<div class="t s" style="left:865px;top:958.01px;font-size:17px;line-height:21px;font-weight:normal;font-style:normal;color:#16191f;transform:scaleX(1.0585);">All</div>
<div class="t s" style="left:1137.5px;top:958.01px;font-size:17px;line-height:21px;font-weight:normal;font-style:normal;color:#16191f;transform:scaleX(1.0585);">All</div>
<div class="t s" style="left:1409.8px;top:958.18px;font-size:16.5px;line-height:21px;font-weight:normal;font-style:normal;color:#16191f;transform:scaleX(1.0744);">0.0.0.0/0</div>
<div class="t s" style="left:325px;top:993.18px;font-size:16.5px;line-height:21px;font-weight:normal;font-style:normal;color:#16191f;">*</div>
<div class="t s" style="left:592.5px;top:996.18px;font-size:16.5px;line-height:21px;font-weight:normal;font-style:normal;color:#16191f;transform:scaleX(1.0879);">All traffic</div>
<div class="t s" style="left:865px;top:996.01px;font-size:17px;line-height:21px;font-weight:normal;font-style:normal;color:#16191f;transform:scaleX(1.0585);">All</div>
<div class="t s" style="left:1137.5px;top:996.01px;font-size:17px;line-height:21px;font-weight:normal;font-style:normal;color:#16191f;transform:scaleX(1.0585);">All</div>
<div class="t s" style="left:1409.8px;top:996.18px;font-size:16.5px;line-height:21px;font-weight:normal;font-style:normal;color:#16191f;transform:scaleX(1.0744);">0.0.0.0/0</div>
<svg class="r" style="left:1681.5px;top:958.5px" width="20" height="20" viewBox="0 0 20 20"><circle cx="10" cy="10" r="8.3" stroke="#1d8102" stroke-width="2" fill="none"/><path d="M6 10.2 L8.8 13 L14 7.5" stroke="#1d8102" stroke-width="2" fill="none"/></svg>
<div class="t s" style="left:1706px;top:958.18px;font-size:16.5px;line-height:21px;font-weight:normal;font-style:normal;color:#1d8102;transform:scaleX(1.0651);">Allow</div>
<svg class="r" style="left:1681.5px;top:996.4px" width="20" height="20" viewBox="0 0 20 20"><circle cx="10" cy="10" r="8.3" stroke="#d13212" stroke-width="2" fill="none"/><path d="M6.8 6.8 L13.2 13.2 M13.2 6.8 L6.8 13.2" stroke="#d13212" stroke-width="2"/></svg>
<div class="t s" style="left:1706px;top:996.18px;font-size:16.5px;line-height:21px;font-weight:normal;font-style:normal;color:#d13212;transform:scaleX(0.9735);">Deny</div>
<div class="r" style="left:284px;top:894px;width:1660px;height:17.6px;background:#911f8e;"></div>
<div class="r" style="left:284px;top:1031px;width:1660px;height:17.6px;background:#911f8e;"></div>
<div class="r" style="left:284px;top:894px;width:18px;height:154.6px;background:#911f8e;"></div>
<div class="r" style="left:1926px;top:894px;width:18px;height:154.6px;background:#911f8e;"></div>
<svg class="r" style="left:300px;top:700px" width="270" height="100" viewBox="0 0 270 100"><path d="M19 42.8 H176 V6.5 L264 50.7 L176 95 V60 H19 Z" fill="#911f8e"/></svg>
<div class="r" style="left:0px;top:1113px;width:2000px;height:30px;background:#232f3e;"></div>
<svg class="r" style="left:17px;top:1121px" width="21" height="21" viewBox="0 0 21 21"><rect x="1.5" y="1.5" width="17" height="17" rx="2.5" stroke="#fff" stroke-width="2" fill="none"/><path d="M5.5 6 L9 9.5 L5.5 13" stroke="#fff" stroke-width="1.8" fill="none"/><path d="M10 13.5 H14.5" stroke="#fff" stroke-width="1.8"/></svg>
<div class="t" style="left:43.5px;top:1122.68px;font-size:14.5px;line-height:18px;font-weight:bold;font-style:normal;color:#fff;transform:scaleX(0.9112);">CloudShell</div>
<div class="t" style="left:142.5px;top:1122.68px;font-size:14.5px;line-height:18px;font-weight:bold;font-style:normal;color:#fff;transform:scaleX(0.8895);">Feedback</div>
<div class="t" style="left:1354.9px;top:1122.68px;font-size:14.5px;line-height:18px;font-weight:bold;font-style:normal;color:#fff;transform:scaleX(0.9312);">© 2023, Amazon Web Services, Inc. or its affiliates.</div>
<div class="t" style="left:1715px;top:1122.68px;font-size:14.5px;line-height:18px;font-weight:bold;font-style:normal;color:#fff;transform:scaleX(0.8915);">Privacy</div>
<div class="t" style="left:1790.8px;top:1122.68px;font-size:14.5px;line-height:18px;font-weight:bold;font-style:normal;color:#fff;transform:scaleX(0.9188);">Terms</div>
<div class="t" style="left:1859.6px;top:1122.68px;font-size:14.5px;line-height:18px;font-weight:bold;font-style:normal;color:#fff;transform:scaleX(0.9065);">Cookie preferences</div>
</body></html>
